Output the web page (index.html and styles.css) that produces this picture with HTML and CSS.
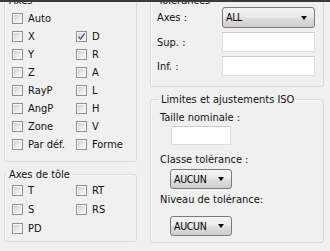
FILE: index.html
```html
<!DOCTYPE html>
<html>
<head>
<meta charset="utf-8">
<link rel="stylesheet" href="styles.css">
</head>
<body>

<!--window edge-->
<div class="topbar"></div>

<div class="panes">

  <!--Left column-->
  <div class="colLeft">

    <fieldset class="group axesGroup">
      <legend>Axes</legend>
      <label class="cbRow"><span class="cb"></span>Auto</label>
      <div class="cbGrid">
        <label class="cbRow"><span class="cb"></span>X</label>
        <label class="cbRow"><span class="cb checked"><svg width="9" height="9" viewBox="0 0 9 9"><path d="M1.5 4.8 L3.6 7 L7.6 1.6" fill="none" stroke="#3d5a98" stroke-width="1.4"/></svg></span>D</label>
        <label class="cbRow"><span class="cb"></span>Y</label>
        <label class="cbRow"><span class="cb"></span>R</label>
        <label class="cbRow"><span class="cb"></span>Z</label>
        <label class="cbRow"><span class="cb"></span>A</label>
        <label class="cbRow"><span class="cb"></span>RayP</label>
        <label class="cbRow"><span class="cb"></span>L</label>
        <label class="cbRow"><span class="cb"></span>AngP</label>
        <label class="cbRow"><span class="cb"></span>H</label>
        <label class="cbRow"><span class="cb"></span>Zone</label>
        <label class="cbRow"><span class="cb"></span>V</label>
        <label class="cbRow"><span class="cb"></span>Par déf.</label>
        <label class="cbRow"><span class="cb"></span>Forme</label>
      </div>
    </fieldset>

    <fieldset class="group toleGroup">
      <legend>Axes de tôle</legend>
      <div class="cbGrid tole">
        <label class="cbRow"><span class="cb"></span>T</label>
        <label class="cbRow"><span class="cb"></span>RT</label>
        <label class="cbRow"><span class="cb"></span>S</label>
        <label class="cbRow"><span class="cb"></span>RS</label>
        <label class="cbRow"><span class="cb"></span>PD</label>
      </div>
    </fieldset>

  </div>

  <!--Right column-->
  <div class="colRight">

    <fieldset class="group tolGroup">
      <legend>Tolérances</legend>
      <div class="formGrid">
        <span class="lbl">Axes :</span>
        <div class="combo wide"><span class="comboText">ALL</span><span class="arrow"></span></div>
        <span class="lbl">Sup. :</span>
        <div class="field wide"></div>
        <span class="lbl">Inf. :</span>
        <div class="field wide"></div>
      </div>
    </fieldset>

    <fieldset class="group isoGroup">
      <legend>Limites et ajustements ISO</legend>
      <div class="isoLbl first">Taille nominale :</div>
      <div class="field small"></div>
      <div class="isoLbl">Classe tolérance :</div>
      <div class="combo small"><span class="comboText">AUCUN</span><span class="arrow"></span></div>
      <div class="isoLbl niveau">Niveau de tolérance:</div>
      <div class="combo small"><span class="comboText">AUCUN</span><span class="arrow"></span></div>
    </fieldset>

  </div>

</div>

</body>
</html>
```

FILE: styles.css
```css
body {
  margin: 0;
  width: 330px;
  height: 251px;
  overflow: hidden;
  background-color: #f0f0f0;
  font-family: "DejaVu Sans Condensed", "DejaVu Sans", sans-serif;
  font-size: 11px;
  line-height: 13px;
  color: #111;
}

/* dark edge of the window above */
.topbar {
  position: relative;
  z-index: 2;
  height: 2px;
  background-color: #3a3a3a;
}

.panes {
  display: flex;
  gap: 13px;
  padding-left: 4px;
  margin-top: -8px;
}

/* Group boxes */
.group {
  margin: 0;
  min-width: 0;
  border: 1px solid #d5dbe0;
  border-radius: 3px;
  box-shadow: inset 1px 1px 0 #fbfbfb;
}

.group legend {
  padding: 0 2px;
  margin-left: -1px;
}

.colLeft {
  display: flex;
  flex-direction: column;
  gap: 6px;
  width: 133px;
}

.colLeft .group legend {
  margin-left: -5px;
}

.axesGroup {
  padding: 2px 4px 8px 7px;
}

.toleGroup {
  padding: 0 4px 3px 7px;
}

/* Checkboxes */
.cbRow {
  display: flex;
  align-items: center;
  height: 18px;
  white-space: nowrap;
}

.cbGrid {
  display: grid;
  grid-template-columns: 64px 1fr;
}

.cbGrid.tole .cbRow {
  height: 19px;
}

.cb {
  display: flex;
  align-items: center;
  justify-content: center;
  box-sizing: border-box;
  width: 11px;
  height: 11px;
  margin-right: 5px;
  border: 1px solid #8f9192;
  box-shadow: inset 0 0 0 1px #f6f6f6;
  background: linear-gradient(135deg, #c8cbce, #eff0f1 70%, #f6f6f6);
}

.cb.checked {
  background: linear-gradient(135deg, #d3d8e0, #f3f4f6);
}

/* Right column */
.colRight {
  display: flex;
  flex-direction: column;
  gap: 6px;
  width: 174px;
}

.tolGroup {
  padding: 0 7px 10px 6px;
}

.formGrid {
  display: grid;
  grid-template-columns: 65px 93px;
  row-gap: 4px;
  align-items: center;
}

.isoGroup {
  padding: 5px 7px 6px 9px;
}

.isoLbl {
  height: 13px;
}

.isoLbl.first {
  margin-bottom: 2px;
}

/* Inputs */
.field {
  box-sizing: border-box;
  height: 20px;
  background-color: #ffffff;
  border: 1px solid #dcdfe3;
  border-top-color: #c9ccd1;
}

.field.small {
  width: 60px;
  height: 19px;
  margin: 0 0 8px 11px;
}

/* Combo boxes */
.combo {
  box-sizing: border-box;
  display: flex;
  align-items: center;
  justify-content: space-between;
  height: 21px;
  padding: 0 7px 0 3px;
  border: 1px solid #7a7a7a;
  border-radius: 3px;
  background: linear-gradient(#f3f3f3, #ebebeb 45%, #dddddd 55%, #cfcfcf);
  color: #000;
}

.combo.small {
  width: 62px;
  height: 20px;
  margin: 3px 0 0 10px;
}

.combo.small + .isoLbl.niveau {
  margin-top: 4px;
  margin-bottom: 10px;
}

.comboText {
  font-size: 10.5px;
  letter-spacing: -0.3px;
}

.arrow {
  width: 0;
  height: 0;
  border-left: 3.5px solid transparent;
  border-right: 3.5px solid transparent;
  border-top: 4px solid #000;
}
```
